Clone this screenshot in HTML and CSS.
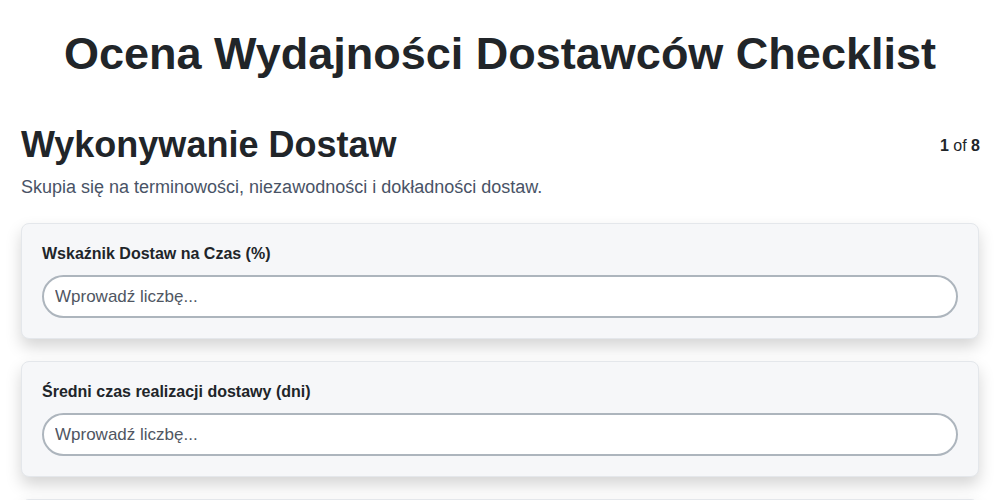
FILE: index.html
```html
<!DOCTYPE html>
<html lang="pl">
<head>
    <meta charset="UTF-8">
    <meta name="viewport" content="width=device-width, initial-scale=1.0">
    <title>Ocena Wydajności Dostawców Checklist</title>
    <link rel="stylesheet" href="styles.css">
</head>
<body>
    <div class="checklist">
        <h1 class="checklist-title">Ocena Wydajności Dostawców Checklist</h1>

        <section class="step">
            <div class="step-header">
                <h2 class="step-title">Wykonywanie Dostaw</h2>
                <div class="step-counter"><strong>1</strong> of <strong>8</strong></div>
            </div>
            <p class="step-desc">Skupia się na terminowości, niezawodności i dokładności dostaw.</p>

            <div class="question">
                <label class="question-label" for="q1">Wskaźnik Dostaw na Czas (%)</label>
                <input type="number" id="q1" class="question-input" placeholder="Wprowadź liczbę...">
            </div>

            <div class="question">
                <label class="question-label" for="q2">Średni czas realizacji dostawy (dni)</label>
                <input type="number" id="q2" class="question-input" placeholder="Wprowadź liczbę...">
            </div>

            <div class="question">
                <label class="question-label" for="q3">Dokładność zamówień (%)</label>
                <input type="number" id="q3" class="question-input" placeholder="Wprowadź liczbę...">
            </div>
        </section>
    </div>
</body>
</html>
```

FILE: styles.css
```css
:root {
    --text: #212529;
    --muted: #495366;
    --card: #f6f7f9;
    --border: #e4e7eb;
    --input-border: #adb5bd;
}

* {
    box-sizing: border-box;
    margin: 0;
    padding: 0;
}

body {
    font-family: 'Liberation Sans', Arial, sans-serif;
    color: var(--text);
    background: #ffffff;
}

.checklist {
    max-width: 958px;
    margin: 0 auto;
    padding-top: 27px;
}

.checklist-title {
    text-align: center;
    font-size: 45px;
    font-weight: 700;
    line-height: 54px;
    margin-bottom: 42px;
}

.step-header {
    display: flex;
    justify-content: space-between;
    align-items: center;
}

.step-title {
    font-size: 36px;
    font-weight: 700;
    line-height: 43px;
}

.step-counter {
    font-size: 16px;
    margin-right: -1px;
    padding-top: 2px;
}

.step-desc {
    font-size: 18px;
    color: var(--muted);
    margin-top: 11px;
    margin-bottom: 25px;
}

.question {
    background: var(--card);
    border: 1px solid var(--border);
    border-radius: 8px;
    padding: 21px 20px 20px;
    margin-bottom: 22px;
    box-shadow: 0 8px 16px rgba(0, 0, 0, 0.17);
}

.question-label {
    display: block;
    font-size: 16px;
    font-weight: 700;
    margin-bottom: 12px;
}

.question-input {
    display: block;
    width: 100%;
    height: 43px;
    padding: 0 11px;
    border: 2px solid var(--input-border);
    border-radius: 999px;
    background: #ffffff;
    font-family: inherit;
    font-size: 17px;
    color: var(--text);
}

.question-input::placeholder {
    color: #4f5662;
}

.question-input::-webkit-outer-spin-button,
.question-input::-webkit-inner-spin-button {
    -webkit-appearance: none;
}
```
